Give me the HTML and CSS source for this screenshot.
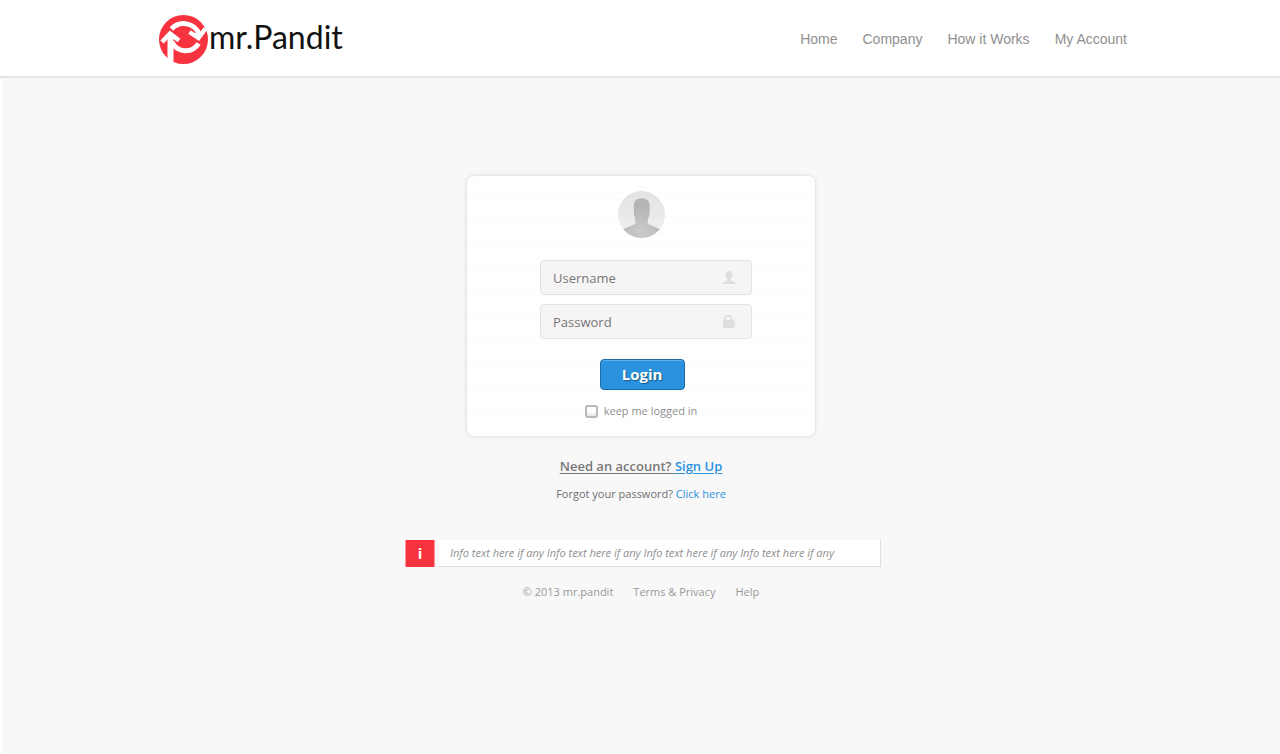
FILE: index.html
```html
<!DOCTYPE html>
<html lang="en">

<head>
    <meta charset="UTF-8">
    <meta name="viewport" content="width=device-width, initial-scale=1.0">
    <title>mr.Pandit - Login</title>
    <link rel="stylesheet" href="styles.css">
</head>

<body>
    <header class="header">
        <div class="header-inner">
            <a class="logo" href="#">
                <svg class="logo-mark" viewBox="0 0 49 49" aria-hidden="true">
                    <circle cx="24.5" cy="24.5" r="24.5" fill="#f6333f" />
                    <!-- top arrow -->
                    <path d="M12.500 14 A16.500 16.500 0 0 1 40 19" fill="none" stroke="#fff" stroke-width="5" />
                    <path d="M30.500 17 L39.500 23 L46.500 13.500" fill="none" stroke="#fff" stroke-width="4.500" />
                    <path d="M35.500 18 L42.500 16 L40 22 Z" fill="#fff" />
                    <!-- bottom arrow, the stem makes the letter p -->
                    <path d="M13 27 A15 15 0 0 0 39.500 28.500" fill="none" stroke="#fff" stroke-width="5" />
                    <path d="M8.500 21 L11 18 L14.500 21 V49 L8.500 44 Z" fill="#fff" />
                    <path d="M3 27 L11 18.500 L20 25.500" fill="none" stroke="#fff" stroke-width="4.500" />
                </svg>
                <span class="logo-text">mr.Pandit</span>
            </a>
            <nav class="nav">
                <a href="#">Home</a>
                <a href="#">Company</a>
                <a href="#">How it Works</a>
                <a href="#">My Account</a>
            </nav>
        </div>
    </header>

    <main class="main">
        <form class="card">
            <svg class="avatar" viewBox="0 0 46 46" aria-hidden="true">
                <defs>
                    <linearGradient id="bg" x1="0" y1="0" x2="0" y2="1">
                        <stop offset="0" stop-color="#e2e2e2" />
                        <stop offset="1" stop-color="#f1f1f1" />
                    </linearGradient>
                    <radialGradient id="man" cx=".5" cy=".9" r=".7">
                        <stop offset="0" stop-color="#cbcbcb" />
                        <stop offset="1" stop-color="#b4b4b4" />
                    </radialGradient>
                    <clipPath id="round">
                        <circle cx="23" cy="23" r="23" />
                    </clipPath>
                </defs>
                <g clip-path="url(#round)">
                    <rect width="46" height="46" fill="url(#bg)" />
                    <path d="M15.500 14 Q15.500 7 23 7 Q31 7 31 14 V22 Q31 24.500 30 25.500 Q29 28 29 32 L42 38 V46 H4 V38 L17 32 Q17 28 16.500 25.500 Q15.500 24.500 15.500 22 Z" fill="url(#man)" />
                </g>
            </svg>

            <div class="fields">
                <div class="field">
                    <input type="text" placeholder="Username" aria-label="Username">
                    <svg class="field-icon" viewBox="0 0 14 14" aria-hidden="true">
                        <path d="M3.500 4 Q3.500 0 7 0 Q10.500 0 10.500 4 Q10.500 6.500 8.500 8 V9 Q9 10 11 10.500 Q13 11 14 13 H0 Q1 11 3 10.500 Q5 10 5.500 9 V8 Q3.500 6.500 3.500 4 Z" fill="#dedcdd" />
                    </svg>
                </div>
                <div class="field">
                    <input type="password" placeholder="Password" aria-label="Password">
                    <svg class="field-icon" viewBox="0 0 14 14" aria-hidden="true">
                        <path d="M3 7 V4 A3.300 3.300 0 0 1 9.600 4 V7" fill="none" stroke="#dedcdd" stroke-width="1.800" />
                        <rect x="1" y="5" width="11" height="8" fill="#dedcdd" />
                        <rect x="12" y="6" width="1.500" height="6" fill="#e9e7e8" />
                    </svg>
                </div>
            </div>

            <button class="btn-login" type="submit">Login</button>

            <label class="keep">
                <input type="checkbox">
                keep me logged in
            </label>
        </form>

        <p class="signup">Need an account? <a href="#">Sign Up</a></p>
        <p class="forgot">Forgot your password? <a href="#">Click here</a></p>

        <div class="info">
            <span class="info-icon">i</span>
            <p class="info-text">Info text here if any Info text here if any Info text here if any Info text here if any</p>
        </div>

        <footer class="footer">
            <span>© 2013 mr.pandit</span>
            <a href="#">Terms &amp; Privacy</a>
            <a href="#">Help</a>
        </footer>
    </main>
</body>

</html>
```

FILE: styles.css
```css
* {
    box-sizing: border-box;
}

body {
    margin: 0;
    min-height: 100vh;
    display: flex;
    flex-direction: column;
    background: #fff;
    font-family: "Open Sans", "Noto Sans", sans-serif;
    font-size: 11px;
    color: #8f8f8f;
}

a {
    color: inherit;
    text-decoration: none;
}

p {
    margin: 0;
}

/* header */
.header {
    border-bottom: 2px solid #e4e4e4;
    background: #fff;
}

.header-inner {
    display: flex;
    align-items: center;
    justify-content: space-between;
    max-width: 974px;
    height: 76px;
    margin: 0 auto;
    padding: 2px 0 0 6px;
}

.logo {
    display: flex;
    align-items: center;
    gap: 1px;
}

.logo-mark {
    width: 49px;
    height: 49px;
}

.logo-text {
    padding-bottom: 4px;
    font-family: Lato, "Open Sans", sans-serif;
    font-size: 32px;
    line-height: 44px;
    color: #111;
}

.nav {
    display: flex;
    gap: 25px;
    font-family: "Liberation Sans", Arial, sans-serif;
    font-size: 14px;
}

/* login card */
.main {
    flex: 1;
    display: flex;
    flex-direction: column;
    align-items: center;
    padding: 97px 0 40px;
    border-left: 2px solid #fff;
    background: #f8f8f8;
}

.card {
    display: flex;
    flex-direction: column;
    align-items: center;
    width: 350px;
    padding: 15px 0 16px;
    border: 1px solid #e6e6e6;
    border-radius: 8px;
    background: repeating-linear-gradient(#fff 0, #fff 4px, #fdfdfd 4px, #fdfdfd 6px);
    box-shadow: 0 0 4px rgba(0, 0, 0, 0.08);
}

.avatar {
    width: 47px;
    height: 47px;
}

.fields {
    display: grid;
    gap: 9px;
    margin: 22px 0 20px 10px;
}

.field {
    display: flex;
    align-items: center;
    width: 212px;
    height: 35px;
    padding: 0 15px 0 12px;
    border: 1px solid #e4e2e3;
    border-radius: 4px;
    background: #f6f4f5;
}

.field input {
    flex: 1;
    min-width: 0;
    padding: 0;
    border: 0;
    outline: none;
    background: none;
    font-family: inherit;
    font-size: 13px;
    color: #777;
}

.field input::placeholder {
    color: #777;
}

.field-icon {
    width: 14px;
    height: 14px;
}

.btn-login {
    width: 85px;
    height: 31px;
    margin-left: 2px;
    padding: 0 0 2px;
    border: 1px solid #1d6ca8;
    border-radius: 4px;
    background: #2a92de;
    box-shadow: inset 0 1px 0 #5aaeea;
    font-family: inherit;
    font-size: 15px;
    font-weight: bold;
    color: #fff;
    text-shadow: 1px 1px 1px rgba(0, 0, 0, 0.4);
    cursor: pointer;
}

.keep {
    display: flex;
    align-items: center;
    gap: 6px;
    margin-top: 12px;
    line-height: 18px;
}

.keep input {
    appearance: none;
    width: 13px;
    height: 13px;
    margin: 0;
    border: 2px solid #b9b9b9;
    border-radius: 3px;
    background: linear-gradient(#fff 50%, #e6e6e6);
}

.keep input:checked {
    background: #2a92de;
}

/* links under the card */
.signup {
    margin-top: 19px;
    font-size: 13px;
    line-height: 20px;
    font-weight: 600;
    color: #777;
    text-decoration: underline;
    text-underline-offset: 2px;
}

.signup a,
.forgot a {
    color: #2a92de;
}

.signup a {
    text-decoration: underline;
    text-underline-offset: 2px;
}

.forgot {
    margin-top: 9px;
    line-height: 18px;
    color: #6f6f6f;
}

/* info bar */
.info {
    display: flex;
    gap: 4px;
    width: 476px;
    margin: 37px 0 0 4px;
    line-height: 26px;
}

.info-icon {
    width: 30px;
    border: 1px solid #f99;
    border-width: 0 1px;
    background: #f6333f;
    font-size: 15px;
    font-weight: bold;
    text-align: center;
    color: #fff;
}

.info-text {
    flex: 1;
    padding-left: 11px;
    border: 1px solid #dedede;
    border-width: 0 1px 1px 0;
    background: #fff;
    font-style: italic;
    white-space: nowrap;
}

.footer {
    display: flex;
    gap: 20px;
    margin-top: 16px;
    line-height: 18px;
    color: #999;
}
```
